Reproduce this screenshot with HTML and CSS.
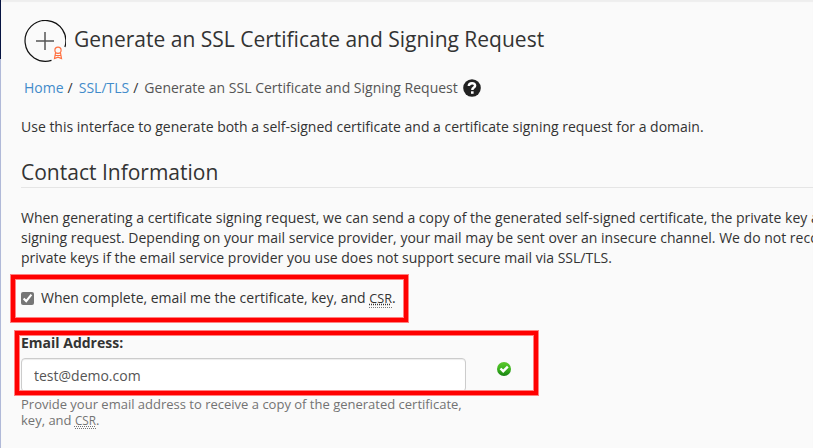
FILE: index.html
```
<!DOCTYPE html>
<html lang="en">
<head>
  <meta charset="utf-8" />
  <meta content="width=device-width,initial-scale=1.0" name="viewport">
  <title>Generate an SSL Certificate and Signing Request</title>
  <link rel="stylesheet" href="styles.css">
</head>
<body>
  <div class="page">
    <div class="side"></div>
    <main class="content">
      <header class="page-header">
        <svg class="page-icon" width="42" height="42" viewBox="0 0 42 42" fill="none">
          <path d="M40.900 27A20.400 20.400 0 1 0 27.500 40.350" stroke="#111" stroke-width="1.200"/>
          <path d="M21 12v18M12 21h18" stroke="#555" stroke-width="1.500"/>
          <circle cx="34" cy="30.200" r="3.100" stroke="#ff7040" stroke-width="1.200"/>
          <path d="M31.500 33l-1 5.500 3.500-1.300 3.500 1.300-1-5.500M31 35.500h6" stroke="#ff7040" stroke-width="1.200"/>
        </svg>
        <h1>Generate an SSL Certificate and Signing Request</h1>
      </header>
      <nav class="breadcrumb">
        <a href="#">Home</a><span class="sep">/</span>
        <a href="#">SSL/TLS</a><span class="sep">/</span>
        <span class="current">Generate an SSL Certificate and Signing Request</span>
        <a href="#" class="help-link" aria-label="Help">
          <svg width="18" height="18" viewBox="0 0 18 18">
            <circle cx="9" cy="9" r="8.800" fill="#222"/>
            <path d="M5.800 7C6 3.500 12.100 3.300 12.100 6.800C12.100 8.700 9.300 8.500 9.300 10.900" fill="none" stroke="#fff" stroke-width="2.500"/>
            <path d="M8 12.300h2.600v2.500H8z" fill="#fff"/>
          </svg>
        </a>
      </nav>
      <p class="intro">Use this interface to generate both a self-signed certificate and a certificate signing request for a domain.</p>

      <h2>Contact Information</h2>
      <p class="desc">When generating a certificate signing request, we can send a copy of the generated self-signed certificate, the private key and<br>
        signing request. Depending on your mail service provider, your mail may be sent over an insecure channel. We do not recommend<br>
        private keys if the email service provider you use does not support secure mail via SSL/TLS.</p>

      <form>
        <div class="check-row marked">
          <input type="checkbox" id="sendEmail" checked>
          <label for="sendEmail">When complete, email me the certificate, key, and <abbr title="Certificate Signing Request">CSR</abbr>.</label>
        </div>
        <div class="email-group marked">
          <label class="email-label" for="email">Email Address:</label>
          <div class="email-row">
            <input class="email-ipt" type="text" id="email" value="test@demo.com">
            <svg class="valid-icon" width="14" height="14" viewBox="0 0 14 14">
              <defs>
                <linearGradient id="green" x1="0" y1="0" x2="0" y2="1">
                  <stop offset="0" stop-color="#5cc82c"/>
                  <stop offset="0.500" stop-color="#3db41f"/>
                  <stop offset="1" stop-color="#168012"/>
                </linearGradient>
              </defs>
              <circle cx="7" cy="7" r="7" fill="url(#green)"/>
              <path d="M3.500 6.500l2.700 2.700 4.600-4.600" fill="none" stroke="#fff" stroke-width="2.400"/>
            </svg>
          </div>
        </div>
        <p class="help-text">Provide your email address to receive a copy of the generated certificate, key, and <abbr title="Certificate Signing Request">CSR</abbr>.</p>
      </form>
    </main>
  </div>
</body>
</html>
```
FILE: styles.css
```
*{margin:0;padding:0;box-sizing:border-box;}
body{
  font-family: "Open Sans", "Noto Sans", sans-serif;
  font-size: 14px;
  line-height: 20px;
  color: #333;
  background: #fafafa;
}
a{
  color: #428bca;
  text-decoration: none;
}
.page{
  display: flex;
  min-height: 100vh;
}
.side{
  flex: none;
  width: 1px;
  background: linear-gradient(#061442 59px, #b0b9d8 59px);
}
.content{
  flex: 1;
  min-width: 0;
  overflow: hidden;
  padding: 20px 0 16px 20px;
  box-shadow: inset 0 2px 1px #eee;
}
.page-header{
  display: flex;
  gap: 8px;
  padding-left: 3px;
}
.page-icon{
  flex: none;
}
h1{
  font-size: 21px;
  font-weight: 400;
  line-height: 38px;
}
.breadcrumb{
  display: flex;
  align-items: center;
  margin-top: 16px;
  padding-left: 3px;
}
.sep{
  padding: 0 6px 0 4px;
}
.current{
  color: #555;
}
.help-link{
  display: flex;
  margin-left: 5px;
}
.intro{
  margin-top: 19px;
}
h2{
  margin-top: 20px;
  font-size: 21px;
  font-weight: 400;
  line-height: 30px;
  border-bottom: 1px solid #e5e5e5;
}
.desc{
  margin-top: 20px;
  white-space: nowrap;
}
abbr{
  font-size: 90%;
  text-decoration: underline dotted;
  border-bottom: 1px dotted #777;
  cursor: help;
}
/* red frames around the fields */
.marked{
  position: relative;
  width: fit-content;
}
.marked::after{
  content: "";
  position: absolute;
  border: 4px solid #f00;
  box-shadow: 0 0 0 1px #ff8080, inset 0 0 0 1px #ff8080;
  pointer-events: none;
}
.check-row{
  display: flex;
  align-items: center;
  gap: 7px;
  margin-top: 20px;
}
.check-row::after{
  inset: -13px -12px -13px -10px;
}
.check-row input{
  width: 13px;
  height: 13px;
  accent-color: #767676;
}
.email-group{
  margin-top: 24px;
}
.email-group::after{
  inset: -2px -27px -3px -6px;
}
.email-label{
  display: block;
  font-weight: 700;
}
.email-row{
  display: flex;
  gap: 31px;
  margin-top: 5px;
}
.email-ipt{
  width: 445px;
  height: 34px;
  padding: 0 12px;
  font: inherit;
  color: #555;
  background: #fff;
  border: 1px solid #ccc;
  border-radius: 4px;
  box-shadow: inset 0 1px 1px rgba(0,0,0,.075);
}
.valid-icon{
  margin-top: 4px;
}
.help-text{
  max-width: 445px;
  margin-top: 4px;
  font-size: 13px;
  line-height: 16px;
  color: #737373;
}
```
